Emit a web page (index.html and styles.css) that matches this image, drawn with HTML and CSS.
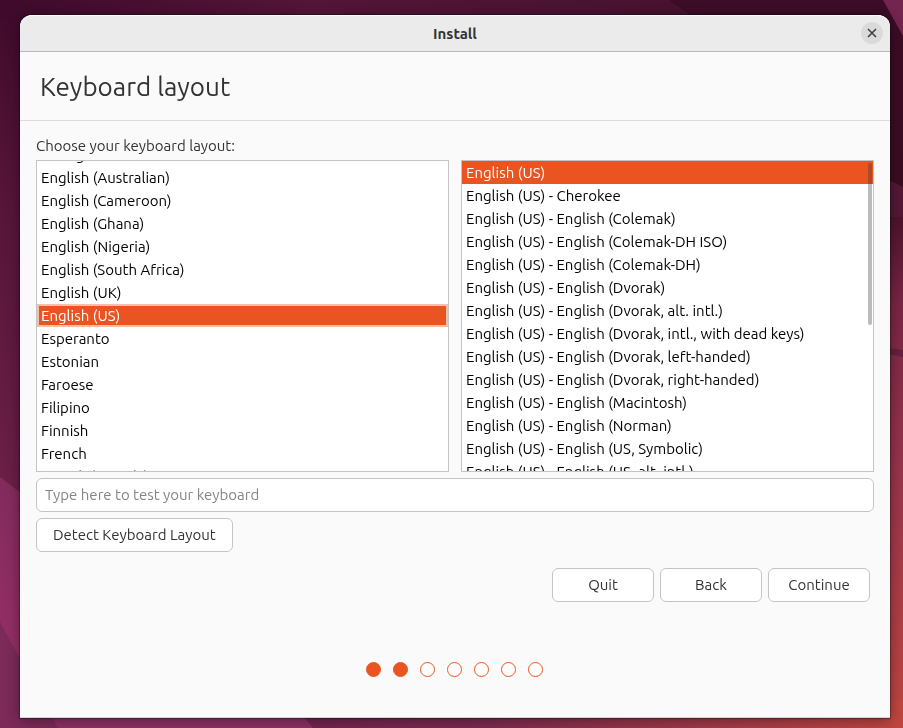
FILE: index.html
```
<!DOCTYPE html>
<html lang="en">
<head>
<meta charset="utf-8">
<title>Install</title>
<link rel="stylesheet" href="styles.css">
</head>
<body>
<svg class="wallpaper" viewBox="0 0 903 728" preserveAspectRatio="none" aria-hidden="true">
  <defs>
    <linearGradient id="left" x1="0" y1="0" x2="0" y2="1">
      <stop offset="0" stop-color="#3f0a2b"/>
      <stop offset=".25" stop-color="#541438"/>
      <stop offset=".7" stop-color="#6d2048"/>
    </linearGradient>
    <linearGradient id="right" x1="0" y1="0" x2="0" y2="1">
      <stop offset="0" stop-color="#3d0c26"/>
      <stop offset=".25" stop-color="#3a0c22"/>
      <stop offset=".42" stop-color="#7a2645"/>
      <stop offset=".65" stop-color="#99344d"/>
      <stop offset="1" stop-color="#c04641"/>
    </linearGradient>
    <linearGradient id="top" x1="0" y1="0" x2="1" y2="0">
      <stop offset="0" stop-color="#3f0a2b"/>
      <stop offset=".45" stop-color="#541538"/>
      <stop offset="1" stop-color="#47122f"/>
    </linearGradient>
    <linearGradient id="bottom" x1="0" y1="0" x2="1" y2="0">
      <stop offset="0" stop-color="#72234f"/>
      <stop offset=".3" stop-color="#7c2a50"/>
      <stop offset="1" stop-color="#c04641"/>
    </linearGradient>
    <linearGradient id="pink" x1="0" y1="0" x2="0" y2="1">
      <stop offset="0" stop-color="#822b5c"/>
      <stop offset="1" stop-color="#9a3069"/>
    </linearGradient>
  </defs>
  <path fill="url(#left)" d="M0 0h460v728H0z"/>
  <path fill="url(#right)" d="M450 0h453v728H450z"/>
  <path fill="url(#top)" d="M0 0h669l28 20H0z"/>
  <path fill="#73244f" d="M883 0h20v36z"/>
  <path fill="#541836" d="M883 177l20 10v30h-20z"/>
  <path fill="url(#bottom)" d="M290 700h613v28H290z"/>
  <path fill="#8c3064" d="M0 700h290l23 28H0z"/>
  <path fill="url(#pink)" d="M0 477l30 23v210H0z"/>
  <path fill="#7c2a58" d="M0 622l58 106H0z"/>
  <path fill="#66203f" d="M883 347l20 3v7l-20-4z"/>
</svg>
<div class="window">
  <header class="titlebar">
    <span class="title">Install</span>
    <button class="close" type="button" aria-label="Close">
      <svg viewBox="0 0 10 10" aria-hidden="true"><path d="M1 1l8 8M9 1L1 9"/></svg>
    </button>
  </header>
  <h1 class="heading">Keyboard layout</h1>
  <main class="content">
    <p class="prompt" id="prompt">Choose your keyboard layout:</p>
    <div class="lists">
      <ul class="list scrolled" role="listbox" aria-labelledby="prompt">
        <li role="option">Dzongkha</li>
        <li role="option">English (Australian)</li>
        <li role="option">English (Cameroon)</li>
        <li role="option">English (Ghana)</li>
        <li role="option">English (Nigeria)</li>
        <li role="option">English (South Africa)</li>
        <li role="option">English (UK)</li>
        <li role="option" class="selected focused" aria-selected="true">English (US)</li>
        <li role="option">Esperanto</li>
        <li role="option">Estonian</li>
        <li role="option">Faroese</li>
        <li role="option">Filipino</li>
        <li role="option">Finnish</li>
        <li role="option">French</li>
        <li role="option">French (Canada)</li>
      </ul>
      <div class="variants">
        <ul class="list" role="listbox" aria-label="Layout variant">
          <li role="option" class="selected" aria-selected="true">English (US)</li>
          <li role="option">English (US) - Cherokee</li>
          <li role="option">English (US) - English (Colemak)</li>
          <li role="option">English (US) - English (Colemak-DH ISO)</li>
          <li role="option">English (US) - English (Colemak-DH)</li>
          <li role="option">English (US) - English (Dvorak)</li>
          <li role="option">English (US) - English (Dvorak, alt. intl.)</li>
          <li role="option">English (US) - English (Dvorak, intl., with dead keys)</li>
          <li role="option">English (US) - English (Dvorak, left-handed)</li>
          <li role="option">English (US) - English (Dvorak, right-handed)</li>
          <li role="option">English (US) - English (Macintosh)</li>
          <li role="option">English (US) - English (Norman)</li>
          <li role="option">English (US) - English (US, Symbolic)</li>
          <li role="option">English (US) - English (US, alt. intl.)</li>
        </ul>
        <span class="thumb"></span>
      </div>
    </div>
    <input class="test" type="text" aria-label="Keyboard test" placeholder="Type here to test your keyboard">
    <button class="button detect" type="button">Detect Keyboard Layout</button>
    <div class="actions">
      <button class="button" type="button">Quit</button>
      <button class="button" type="button">Back</button>
      <button class="button" type="button">Continue</button>
    </div>
  </main>
  <div class="steps" role="img" aria-label="Step 2 of 7">
    <span class="dot done"></span><span class="dot done"></span><span class="dot"></span><span class="dot"></span><span class="dot"></span><span class="dot"></span><span class="dot"></span>
  </div>
</div>
</body>
</html>
```
FILE: styles.css
```
* { box-sizing: border-box; }

body {
  margin: 0;
  min-height: 100vh;
  padding: 15px 13px 10px 20px;
  display: flex;
  background: #541438;
  color: #333;
  font: 15px/23px Ubuntu, "Noto Sans", "Open Sans", sans-serif;
}

.wallpaper {
  position: fixed;
  inset: 0;
  width: 100%;
  height: 100%;
  z-index: -1;
}

.window {
  flex: 1;
  min-width: 0;
  display: flex;
  flex-direction: column;
  background: #fafafa;
  border-bottom: 1px solid #d5d5d5;
  border-radius: 12px 12px 0 0;
  box-shadow: 0 0 1px 1px rgba(0, 0, 0, .3), 0 2px 14px rgba(0, 0, 0, .4);
}

.titlebar {
  display: grid;
  grid-template-columns: 1fr auto 1fr;
  align-items: center;
  height: 37px;
  padding: 0 7px;
  background: #ebebeb;
  border-top: 1px solid #fff;
  border-bottom: 1px solid #b8b8b8;
  border-radius: 12px 12px 0 0;
}

.title {
  grid-column: 2;
  font-weight: 700;
}

.close {
  justify-self: end;
  display: grid;
  place-items: center;
  width: 22px;
  height: 22px;
  margin-bottom: 1px;
  padding: 0;
  border: 0;
  border-radius: 50%;
  background: #dadada;
}

.close svg {
  width: 10px;
  height: 10px;
  fill: none;
  stroke: #3d3d3d;
  stroke-width: 1.5;
}

.heading {
  margin: 0;
  padding: 19px 20px 17px;
  border-bottom: 1px solid #dcdcdc;
  font-size: 26px;
  font-weight: 400;
  line-height: 32px;
}

.content {
  display: flex;
  flex-direction: column;
  padding: 13px 16px 0;
}

.prompt {
  margin: 0 0 3px;
}

.lists {
  display: grid;
  grid-template-columns: 1fr 1fr;
  gap: 12px;
}

.list {
  height: 312px;
  margin: 0;
  padding: 0;
  overflow: hidden;
  list-style: none;
  color: #000;
  background: #fff;
  border: 1px solid #c4c4c4;
}

.list li {
  height: 23px;
  padding: 0 4px;
  white-space: nowrap;
}

.scrolled li:first-child {
  margin-top: -18px;
}

.list .selected {
  color: #fff;
  background: #e95420;
}

.list .focused {
  box-shadow: inset 0 0 0 2px #f7c0ab;
}

.variants {
  position: relative;
  min-width: 0;
}

.thumb {
  position: absolute;
  top: 3px;
  right: 2px;
  width: 4px;
  height: 162px;
  border-radius: 2px;
  background: rgba(61, 61, 61, .35);
}

.test,
.button {
  height: 34px;
  color: inherit;
  font: inherit;
  background: #fff;
  border: 1px solid #c4c4c4;
  border-radius: 6px;
}

.test {
  width: 100%;
  margin: 6px 0;
  padding: 0 8px 2px;
}

.test::placeholder {
  color: #858585;
  opacity: 1;
}

.button {
  min-width: 102px;
  padding: 0 16px 2px;
}

.detect {
  align-self: flex-start;
}

.actions {
  display: flex;
  justify-content: flex-end;
  gap: 6px;
  padding: 16px 4px 0;
}

.steps {
  display: flex;
  justify-content: center;
  gap: 12px;
  padding: 60px 2px 40px 0;
}

.dot {
  width: 15px;
  height: 15px;
  border: 1px solid #e95420;
  border-radius: 50%;
  background: #fff;
}

.done {
  background: #e95420;
}
```
